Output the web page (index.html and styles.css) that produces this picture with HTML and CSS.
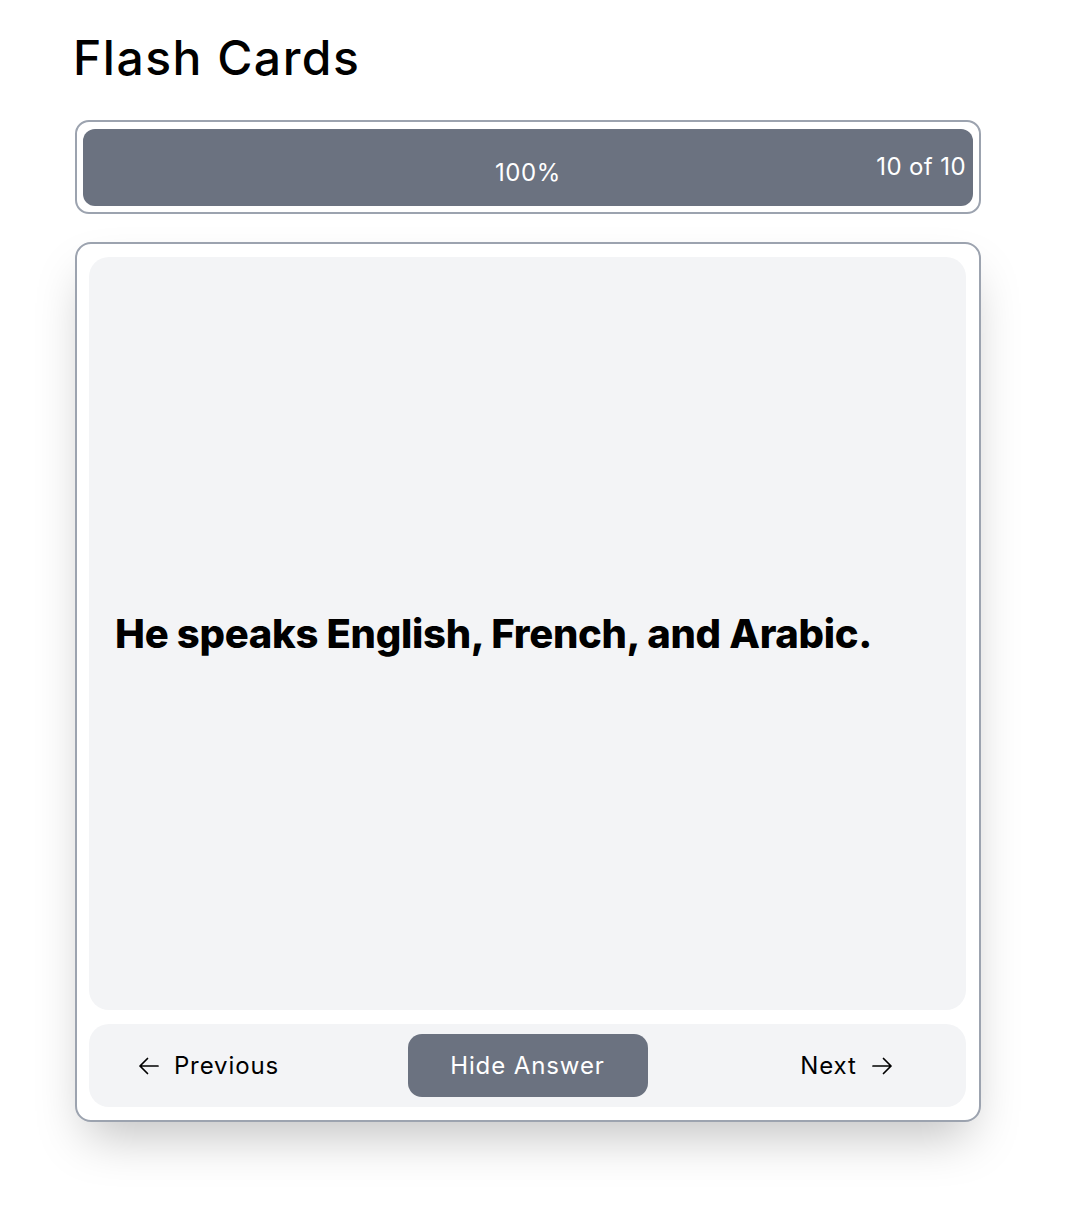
FILE: index.html
```html
<!DOCTYPE html>
<html lang="en">
<head>
<meta charset="utf-8">
<title>Flash Cards</title>
<link rel="stylesheet" href="styles.css">
</head>
<body>
<main class="page">
  <h1 class="title">Flash Cards</h1>

  <div class="progress">
    <div class="progress-bar" style="width: 100%;">
      <span class="progress-percent">100%</span>
      <span class="progress-count">10 of 10</span>
    </div>
  </div>

  <section class="card">
    <div class="card-face">
      <p class="card-text">He speaks English, French, and Arabic.</p>
    </div>
    <div class="controls">
      <button class="nav-btn" type="button">
        <svg class="icon" viewBox="0 0 24 24" fill="none" stroke="currentColor" stroke-width="1.7" stroke-linecap="round" stroke-linejoin="round"><path d="M10.5 19.5 3 12m0 0 7.5-7.5M3 12h18"/></svg>
        <span>Previous</span>
      </button>
      <button class="toggle-btn" type="button">Hide Answer</button>
      <button class="nav-btn" type="button">
        <span>Next</span>
        <svg class="icon" viewBox="0 0 24 24" fill="none" stroke="currentColor" stroke-width="1.7" stroke-linecap="round" stroke-linejoin="round"><path d="M13.5 4.5 21 12m0 0-7.5 7.5M21 12H3"/></svg>
      </button>
    </div>
  </section>
</main>
</body>
</html>
```

FILE: styles.css
```css
* {
  box-sizing: border-box;
}

html, body {
  margin: 0;
  padding: 0;
  background: #ffffff;
}

body {
  font-family: "Inter", "Noto Sans", sans-serif;
  color: #000000;
}

.page {
  width: 906px;
  margin-left: 75px;
  padding-top: 26px;
  padding-bottom: 80px;
}

.title {
  margin: 0 0 30px -2px;
  font-size: 48px;
  line-height: 64px;
  font-weight: 500;
  letter-spacing: 1.5px;
}

.progress {
  border: 2px solid #9ca3af;
  border-radius: 14px;
  padding: 7px 6px 6px 6px;
  height: 94px;
}

.progress-bar {
  position: relative;
  height: 77px;
  background: #6b7280;
  border-radius: 12px;
  color: #ffffff;
  display: flex;
  align-items: center;
  justify-content: center;
}

.progress-percent {
  font-size: 24px;
  line-height: 32px;
  padding-top: 10px;
  letter-spacing: 0.6px;
}

.progress-count {
  position: absolute;
  right: 7px;
  top: 22px;
  font-size: 24px;
  line-height: 32px;
  letter-spacing: 0.4px;
}

.card {
  margin-top: 28px;
  border: 2px solid #9ca3af;
  border-radius: 16px;
  padding: 13px 13px 13px 12px;
  background: #ffffff;
  box-shadow: 0 25px 50px -12px rgba(0, 0, 0, 0.25);
  display: flex;
  flex-direction: column;
  gap: 14px;
}

.card-face {
  height: 753px;
  background: #f3f4f6;
  border-radius: 20px;
  display: flex;
  align-items: center;
  padding: 0 26px;
}

.card-text {
  margin: 0;
  font-size: 40px;
  line-height: 48px;
  font-weight: 800;
  letter-spacing: -0.3px;
}

.controls {
  height: 83px;
  background: #f3f4f6;
  border-radius: 20px;
  padding: 0 24px;
  display: flex;
  align-items: center;
  justify-content: space-between;
}

.nav-btn {
  width: 190px;
  height: 63px;
  border: none;
  background: transparent;
  display: flex;
  align-items: center;
  justify-content: center;
  gap: 13px;
  font-family: inherit;
  font-size: 24px;
  color: #000000;
  letter-spacing: 0.9px;
  padding: 0;
}

.icon {
  width: 24px;
  height: 24px;
  flex: none;
}

.toggle-btn {
  width: 240px;
  height: 63px;
  border: none;
  border-radius: 14px;
  background: #6b7280;
  color: #ffffff;
  font-family: inherit;
  font-size: 24px;
  letter-spacing: 0.9px;
  padding: 0;
}
```
